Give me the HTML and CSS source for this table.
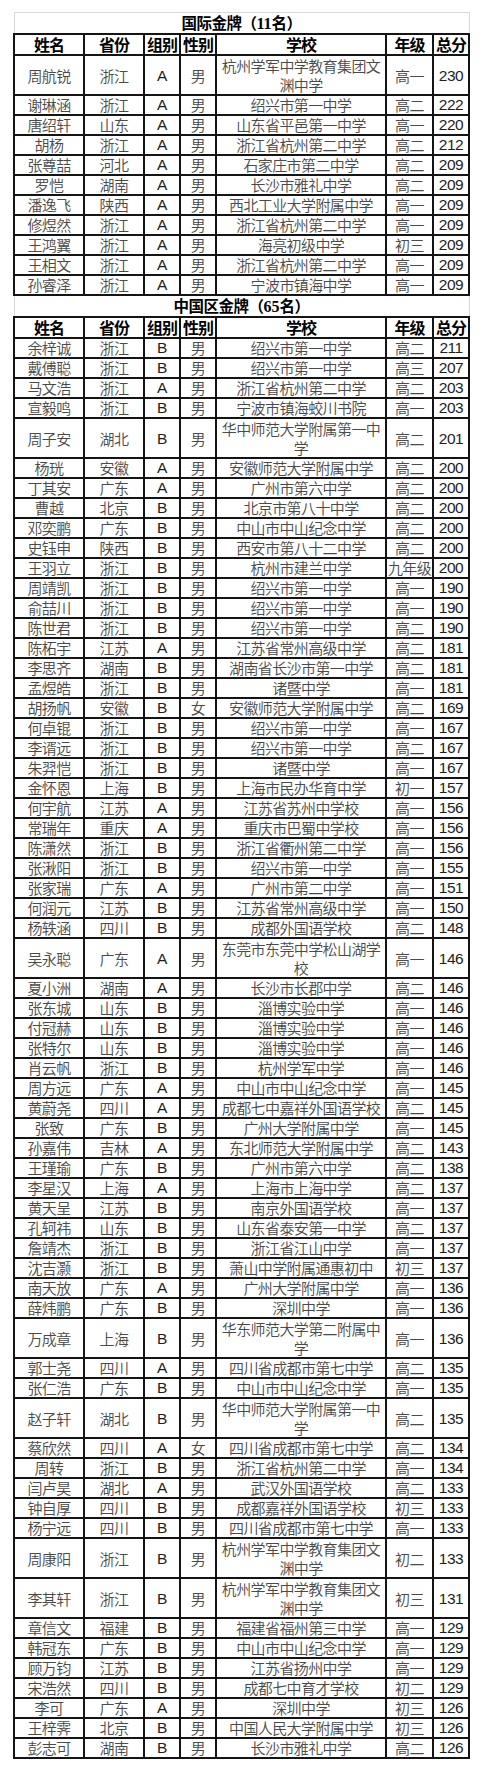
FILE: index.html
```html
<!DOCTYPE html>
<html lang="zh-CN">
<head>
<meta charset="utf-8">
<title>金牌名单</title>
<link rel="stylesheet" href="styles.css">
</head>
<body>
<div class="sheet">
<table class="medals">
<colgroup>
<col class="c-name"><col class="c-prov"><col class="c-grp"><col class="c-sex"><col class="c-school"><col class="c-grade"><col class="c-score">
</colgroup>
<tbody>
<tr class="title"><td colspan="7">国际金牌（<span class="lat">11</span>名）</td></tr>
<tr class="head"><td>姓名</td><td>省份</td><td>组别</td><td>性别</td><td>学校</td><td>年级</td><td>总分</td></tr>
<tr class="tall"><td>周航锐</td><td>浙江</td><td class="lat">A</td><td>男</td><td class="school">杭州学军中学教育集团文渊中学</td><td>高一</td><td class="lat">230</td></tr>
<tr><td>谢琳涵</td><td>浙江</td><td class="lat">A</td><td>男</td><td class="school">绍兴市第一中学</td><td>高二</td><td class="lat">222</td></tr>
<tr><td>唐绍轩</td><td>山东</td><td class="lat">A</td><td>男</td><td class="school">山东省平邑第一中学</td><td>高一</td><td class="lat">220</td></tr>
<tr><td>胡杨</td><td>浙江</td><td class="lat">A</td><td>男</td><td class="school">浙江省杭州第二中学</td><td>高二</td><td class="lat">212</td></tr>
<tr><td>张尊喆</td><td>河北</td><td class="lat">A</td><td>男</td><td class="school">石家庄市第二中学</td><td>高二</td><td class="lat">209</td></tr>
<tr><td>罗恺</td><td>湖南</td><td class="lat">A</td><td>男</td><td class="school">长沙市雅礼中学</td><td>高二</td><td class="lat">209</td></tr>
<tr><td>潘逸飞</td><td>陕西</td><td class="lat">A</td><td>男</td><td class="school">西北工业大学附属中学</td><td>高一</td><td class="lat">209</td></tr>
<tr><td>修煜然</td><td>浙江</td><td class="lat">A</td><td>男</td><td class="school">浙江省杭州第二中学</td><td>高一</td><td class="lat">209</td></tr>
<tr><td>王鸿翼</td><td>浙江</td><td class="lat">A</td><td>男</td><td class="school">海亮初级中学</td><td>初三</td><td class="lat">209</td></tr>
<tr><td>王相文</td><td>浙江</td><td class="lat">A</td><td>男</td><td class="school">浙江省杭州第二中学</td><td>高一</td><td class="lat">209</td></tr>
<tr><td>孙睿泽</td><td>浙江</td><td class="lat">A</td><td>男</td><td class="school">宁波市镇海中学</td><td>高一</td><td class="lat">209</td></tr>
<tr class="title"><td colspan="7">中国区金牌（<span class="lat">65</span>名）</td></tr>
<tr class="head"><td>姓名</td><td>省份</td><td>组别</td><td>性别</td><td>学校</td><td>年级</td><td>总分</td></tr>
<tr><td>余梓诚</td><td>浙江</td><td class="lat">B</td><td>男</td><td class="school">绍兴市第一中学</td><td>高二</td><td class="lat">211</td></tr>
<tr><td>戴傅聪</td><td>浙江</td><td class="lat">B</td><td>男</td><td class="school">绍兴市第一中学</td><td>高三</td><td class="lat">207</td></tr>
<tr><td>马文浩</td><td>浙江</td><td class="lat">A</td><td>男</td><td class="school">浙江省杭州第二中学</td><td>高二</td><td class="lat">203</td></tr>
<tr><td>宣毅鸣</td><td>浙江</td><td class="lat">B</td><td>男</td><td class="school">宁波市镇海蛟川书院</td><td>高一</td><td class="lat">203</td></tr>
<tr class="tall"><td>周子安</td><td>湖北</td><td class="lat">B</td><td>男</td><td class="school">华中师范大学附属第一中学</td><td>高二</td><td class="lat">201</td></tr>
<tr><td>杨珖</td><td>安徽</td><td class="lat">A</td><td>男</td><td class="school">安徽师范大学附属中学</td><td>高二</td><td class="lat">200</td></tr>
<tr><td>丁其安</td><td>广东</td><td class="lat">A</td><td>男</td><td class="school">广州市第六中学</td><td>高二</td><td class="lat">200</td></tr>
<tr><td>曹越</td><td>北京</td><td class="lat">B</td><td>男</td><td class="school">北京市第八十中学</td><td>高二</td><td class="lat">200</td></tr>
<tr><td>邓奕鹏</td><td>广东</td><td class="lat">B</td><td>男</td><td class="school">中山市中山纪念中学</td><td>高二</td><td class="lat">200</td></tr>
<tr><td>史钰申</td><td>陕西</td><td class="lat">B</td><td>男</td><td class="school">西安市第八十二中学</td><td>高二</td><td class="lat">200</td></tr>
<tr><td>王羽立</td><td>浙江</td><td class="lat">B</td><td>男</td><td class="school">杭州市建兰中学</td><td>九年级</td><td class="lat">200</td></tr>
<tr><td>周靖凯</td><td>浙江</td><td class="lat">B</td><td>男</td><td class="school">绍兴市第一中学</td><td>高一</td><td class="lat">190</td></tr>
<tr><td>俞喆川</td><td>浙江</td><td class="lat">B</td><td>男</td><td class="school">绍兴市第一中学</td><td>高一</td><td class="lat">190</td></tr>
<tr><td>陈世君</td><td>浙江</td><td class="lat">B</td><td>男</td><td class="school">绍兴市第一中学</td><td>高二</td><td class="lat">190</td></tr>
<tr><td>陈柘宇</td><td>江苏</td><td class="lat">A</td><td>男</td><td class="school">江苏省常州高级中学</td><td>高二</td><td class="lat">181</td></tr>
<tr><td>李思齐</td><td>湖南</td><td class="lat">B</td><td>男</td><td class="school">湖南省长沙市第一中学</td><td>高二</td><td class="lat">181</td></tr>
<tr><td>孟煜皓</td><td>浙江</td><td class="lat">B</td><td>男</td><td class="school">诸暨中学</td><td>高一</td><td class="lat">181</td></tr>
<tr><td>胡扬帆</td><td>安徽</td><td class="lat">B</td><td>女</td><td class="school">安徽师范大学附属中学</td><td>高二</td><td class="lat">169</td></tr>
<tr><td>何卓锟</td><td>浙江</td><td class="lat">B</td><td>男</td><td class="school">绍兴市第一中学</td><td>高一</td><td class="lat">167</td></tr>
<tr><td>李谞远</td><td>浙江</td><td class="lat">B</td><td>男</td><td class="school">绍兴市第一中学</td><td>高二</td><td class="lat">167</td></tr>
<tr><td>朱羿恺</td><td>浙江</td><td class="lat">B</td><td>男</td><td class="school">诸暨中学</td><td>高一</td><td class="lat">167</td></tr>
<tr><td>金怀恩</td><td>上海</td><td class="lat">B</td><td>男</td><td class="school">上海市民办华育中学</td><td>初一</td><td class="lat">157</td></tr>
<tr><td>何宇航</td><td>江苏</td><td class="lat">A</td><td>男</td><td class="school">江苏省苏州中学校</td><td>高一</td><td class="lat">156</td></tr>
<tr><td>常瑞年</td><td>重庆</td><td class="lat">A</td><td>男</td><td class="school">重庆市巴蜀中学校</td><td>高一</td><td class="lat">156</td></tr>
<tr><td>陈潇然</td><td>浙江</td><td class="lat">B</td><td>男</td><td class="school">浙江省衢州第二中学</td><td>高一</td><td class="lat">156</td></tr>
<tr><td>张湫阳</td><td>浙江</td><td class="lat">B</td><td>男</td><td class="school">绍兴市第一中学</td><td>高一</td><td class="lat">155</td></tr>
<tr><td>张家瑞</td><td>广东</td><td class="lat">A</td><td>男</td><td class="school">广州市第二中学</td><td>高一</td><td class="lat">151</td></tr>
<tr><td>何润元</td><td>江苏</td><td class="lat">B</td><td>男</td><td class="school">江苏省常州高级中学</td><td>高一</td><td class="lat">150</td></tr>
<tr><td>杨轶涵</td><td>四川</td><td class="lat">B</td><td>男</td><td class="school">成都外国语学校</td><td>高二</td><td class="lat">148</td></tr>
<tr class="tall"><td>吴永聪</td><td>广东</td><td class="lat">A</td><td>男</td><td class="school">东莞市东莞中学松山湖学校</td><td>高一</td><td class="lat">146</td></tr>
<tr><td>夏小洲</td><td>湖南</td><td class="lat">A</td><td>男</td><td class="school">长沙市长郡中学</td><td>高二</td><td class="lat">146</td></tr>
<tr><td>张东城</td><td>山东</td><td class="lat">B</td><td>男</td><td class="school">淄博实验中学</td><td>高一</td><td class="lat">146</td></tr>
<tr><td>付冠赫</td><td>山东</td><td class="lat">B</td><td>男</td><td class="school">淄博实验中学</td><td>高一</td><td class="lat">146</td></tr>
<tr><td>张特尔</td><td>山东</td><td class="lat">B</td><td>男</td><td class="school">淄博实验中学</td><td>高一</td><td class="lat">146</td></tr>
<tr><td>肖云帆</td><td>浙江</td><td class="lat">B</td><td>男</td><td class="school">杭州学军中学</td><td>高一</td><td class="lat">146</td></tr>
<tr><td>周方远</td><td>广东</td><td class="lat">A</td><td>男</td><td class="school">中山市中山纪念中学</td><td>高一</td><td class="lat">145</td></tr>
<tr><td>黄蔚尧</td><td>四川</td><td class="lat">A</td><td>男</td><td class="school">成都七中嘉祥外国语学校</td><td>高二</td><td class="lat">145</td></tr>
<tr><td>张致</td><td>广东</td><td class="lat">B</td><td>男</td><td class="school">广州大学附属中学</td><td>高一</td><td class="lat">145</td></tr>
<tr><td>孙嘉伟</td><td>吉林</td><td class="lat">A</td><td>男</td><td class="school">东北师范大学附属中学</td><td>高二</td><td class="lat">143</td></tr>
<tr><td>王瑾瑜</td><td>广东</td><td class="lat">B</td><td>男</td><td class="school">广州市第六中学</td><td>高二</td><td class="lat">138</td></tr>
<tr><td>李星汉</td><td>上海</td><td class="lat">A</td><td>男</td><td class="school">上海市上海中学</td><td>高二</td><td class="lat">137</td></tr>
<tr><td>黄天呈</td><td>江苏</td><td class="lat">B</td><td>男</td><td class="school">南京外国语学校</td><td>高一</td><td class="lat">137</td></tr>
<tr><td>孔轲祎</td><td>山东</td><td class="lat">B</td><td>男</td><td class="school">山东省泰安第一中学</td><td>高二</td><td class="lat">137</td></tr>
<tr><td>詹靖杰</td><td>浙江</td><td class="lat">B</td><td>男</td><td class="school">浙江省江山中学</td><td>高一</td><td class="lat">137</td></tr>
<tr><td>沈吉灏</td><td>浙江</td><td class="lat">B</td><td>男</td><td class="school">萧山中学附属通惠初中</td><td>初三</td><td class="lat">137</td></tr>
<tr><td>南天放</td><td>广东</td><td class="lat">A</td><td>男</td><td class="school">广州大学附属中学</td><td>高一</td><td class="lat">136</td></tr>
<tr><td>薛炜鹏</td><td>广东</td><td class="lat">B</td><td>男</td><td class="school">深圳中学</td><td>高一</td><td class="lat">136</td></tr>
<tr class="tall"><td>万成章</td><td>上海</td><td class="lat">B</td><td>男</td><td class="school">华东师范大学第二附属中学</td><td>高一</td><td class="lat">136</td></tr>
<tr><td>郭士尧</td><td>四川</td><td class="lat">A</td><td>男</td><td class="school">四川省成都市第七中学</td><td>高二</td><td class="lat">135</td></tr>
<tr><td>张仁浩</td><td>广东</td><td class="lat">B</td><td>男</td><td class="school">中山市中山纪念中学</td><td>高一</td><td class="lat">135</td></tr>
<tr class="tall"><td>赵子轩</td><td>湖北</td><td class="lat">B</td><td>男</td><td class="school">华中师范大学附属第一中学</td><td>高二</td><td class="lat">135</td></tr>
<tr><td>蔡欣然</td><td>四川</td><td class="lat">A</td><td>女</td><td class="school">四川省成都市第七中学</td><td>高二</td><td class="lat">134</td></tr>
<tr><td>周转</td><td>浙江</td><td class="lat">B</td><td>男</td><td class="school">浙江省杭州第二中学</td><td>高一</td><td class="lat">134</td></tr>
<tr><td>闫卢昊</td><td>湖北</td><td class="lat">A</td><td>男</td><td class="school">武汉外国语学校</td><td>高二</td><td class="lat">133</td></tr>
<tr><td>钟自厚</td><td>四川</td><td class="lat">B</td><td>男</td><td class="school">成都嘉祥外国语学校</td><td>初三</td><td class="lat">133</td></tr>
<tr><td>杨宁远</td><td>四川</td><td class="lat">B</td><td>男</td><td class="school">四川省成都市第七中学</td><td>高一</td><td class="lat">133</td></tr>
<tr class="tall"><td>周康阳</td><td>浙江</td><td class="lat">B</td><td>男</td><td class="school">杭州学军中学教育集团文渊中学</td><td>初二</td><td class="lat">133</td></tr>
<tr class="tall"><td>李其轩</td><td>浙江</td><td class="lat">B</td><td>男</td><td class="school">杭州学军中学教育集团文渊中学</td><td>初三</td><td class="lat">131</td></tr>
<tr><td>章信文</td><td>福建</td><td class="lat">B</td><td>男</td><td class="school">福建省福州第三中学</td><td>高一</td><td class="lat">129</td></tr>
<tr><td>韩冠东</td><td>广东</td><td class="lat">B</td><td>男</td><td class="school">中山市中山纪念中学</td><td>高一</td><td class="lat">129</td></tr>
<tr><td>顾万钧</td><td>江苏</td><td class="lat">B</td><td>男</td><td class="school">江苏省扬州中学</td><td>高一</td><td class="lat">129</td></tr>
<tr><td>宋浩然</td><td>四川</td><td class="lat">B</td><td>男</td><td class="school">成都七中育才学校</td><td>初二</td><td class="lat">129</td></tr>
<tr><td>李可</td><td>广东</td><td class="lat">A</td><td>男</td><td class="school">深圳中学</td><td>初三</td><td class="lat">126</td></tr>
<tr><td>王梓霁</td><td>北京</td><td class="lat">B</td><td>男</td><td class="school">中国人民大学附属中学</td><td>初三</td><td class="lat">126</td></tr>
<tr><td>彭志可</td><td>湖南</td><td class="lat">B</td><td>男</td><td class="school">长沙市雅礼中学</td><td>高二</td><td class="lat">126</td></tr>
</tbody>
</table>
</div>
</body>
</html>
```

FILE: styles.css
```css
html, body {
  margin: 0;
  padding: 0;
  background: #ffffff;
}

.sheet {
  padding: 12px 0 0 13px;
}

.medals {
  border-collapse: collapse;
  table-layout: fixed;
  width: 455px;
  font-family: "Noto Sans CJK SC", "Noto Sans", sans-serif;
  font-size: 15px;
  font-weight: 350;
  letter-spacing: -0.6px;
  color: #4a4a4a;
}

.c-name { width: 70px; }
.c-prov { width: 60px; }
.c-grp { width: 36px; }
.c-sex { width: 36px; }
.c-school { width: 170px; }
.c-grade { width: 47px; }
.c-score { width: 36px; }

.medals td {
  border: 2px solid #141414;
  padding: 0;
  line-height: 18px;
  text-align: center;
  vertical-align: middle;
  white-space: normal;
}

.medals td.school {
  padding: 0 3px;
  word-break: break-all;
}

.medals td.lat {
  font-family: "Liberation Sans", Arial, sans-serif;
  font-size: 15.5px;
  font-weight: 400;
  letter-spacing: -0.5px;
  color: #1e1e1e;
}

.medals tr.tall td {
  line-height: 19px;
}

.medals tr.title td {
  border-top: 1px solid #d8d8d8;
  border-left: 1px solid #d8d8d8;
  border-right: 1px solid #d8d8d8;
  font-weight: 700;
  font-size: 15.5px;
  letter-spacing: -0.5px;
  color: #000;
  line-height: 18px;
}

.medals tr.title .lat {
  font-family: "Liberation Serif", "Times New Roman", serif;
  font-size: 16px;
  letter-spacing: 0;
}

.medals tr.head td {
  font-weight: 700;
  font-size: 16px;
  letter-spacing: -1px;
  color: #000;
  line-height: 19px;
}
```
